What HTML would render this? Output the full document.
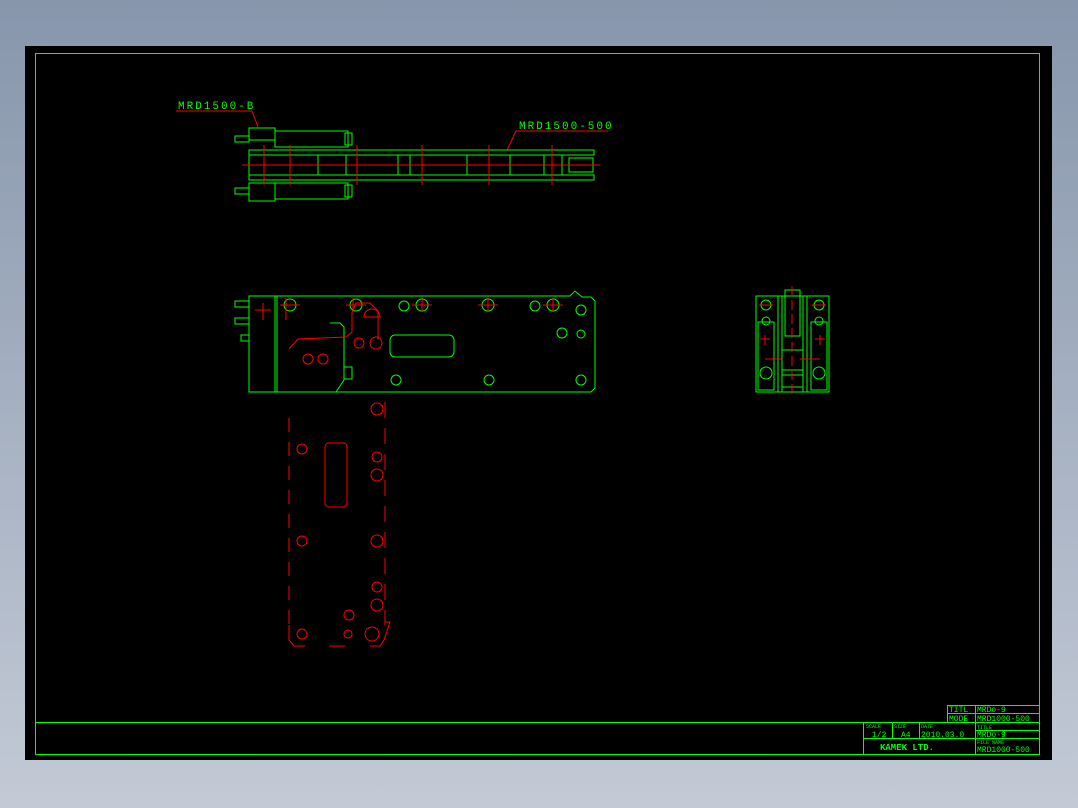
<!DOCTYPE html>
<html><head><style>
html,body{margin:0;padding:0;width:1078px;height:808px;overflow:hidden;background:linear-gradient(#8796ac,#c3cad6);}
svg{position:absolute;left:0;top:0}
text{font-family:"Liberation Mono",monospace;fill:#00ff00;}
</style></head><body>
<svg width="1078" height="808" viewBox="0 0 1078 808">
<rect x="25" y="46" width="1027" height="714" fill="#000"/>
<g fill="none" stroke="#00ff00" stroke-width="1" shape-rendering="crispEdges">
<rect x="35.5" y="53.5" width="1004" height="701"/>
<line x1="35" y1="722.5" x2="1039" y2="722.5"/>
<line x1="863.5" y1="722" x2="863.5" y2="754"/>
<line x1="947.5" y1="705" x2="947.5" y2="722"/>
<line x1="947" y1="705.5" x2="1039" y2="705.5"/>
<line x1="947" y1="713.5" x2="1039" y2="713.5"/>
<line x1="975.5" y1="705" x2="975.5" y2="754"/>
<line x1="863" y1="738.5" x2="1039" y2="738.5"/>
<line x1="892.5" y1="722" x2="892.5" y2="738"/>
<line x1="919.5" y1="722" x2="919.5" y2="738"/>
<line x1="975" y1="730.5" x2="1039" y2="730.5"/>
</g>
<g font-size="8">
<text x="949" y="712">TITL</text><text x="977" y="712">MRDo-9</text>
<text x="949" y="721">MODE</text><text x="977" y="721">MRD1000-500</text>
<text x="866" y="728" font-size="5">SCALE</text><text x="894" y="728" font-size="5">SIZE</text><text x="921" y="728" font-size="5">DATE</text>
<text x="872" y="737">1/2</text><text x="901" y="737">A4</text><text x="921" y="737">2010.03.0</text>
<text x="977" y="729" font-size="5">TITLE</text><text x="977" y="737">MRDo-9</text>
<text x="977" y="744" font-size="5">FILE NAME</text><text x="977" y="752">MRD1000-500</text>
<text x="880" y="750" font-weight="bold" font-size="9">KAMEK LTD.</text>
<text x="178" y="109" font-size="11" letter-spacing="2">MRD1500-B</text>
<text x="519" y="129" font-size="11" letter-spacing="2">MRD1500-500</text>
</g>
<g fill="none" stroke="#ff0000" stroke-width="1">
<line x1="176" y1="111" x2="252" y2="111"/><polyline points="252,111 258,127"/>
<line x1="516" y1="131" x2="608" y2="131"/><polyline points="516,131 507,150"/>
</g>
<!-- top view -->
<g fill="none" stroke="#00ff00" stroke-width="1">
<rect x="249" y="128" width="26" height="12"/><rect x="249" y="183" width="26" height="18"/>
<rect x="275" y="131" width="73" height="16"/><rect x="275" y="183" width="73" height="16"/>
<rect x="345" y="133" width="7" height="12"/><rect x="345" y="185" width="7" height="12"/>
<rect x="235" y="136" width="14" height="6"/><rect x="235" y="188" width="14" height="6"/>
<rect x="249" y="150" width="345" height="5"/><rect x="249" y="175" width="345" height="5"/>
<line x1="249" y1="155" x2="249" y2="175"/>
<rect x="569" y="158" width="24" height="14"/>
<line x1="318" y1="155" x2="318" y2="175"/><line x1="346" y1="155" x2="346" y2="175"/>
<line x1="398" y1="155" x2="398" y2="175"/><line x1="410" y1="155" x2="410" y2="175"/>
<line x1="467" y1="155" x2="467" y2="175"/><line x1="510" y1="155" x2="510" y2="175"/>
<line x1="544" y1="155" x2="544" y2="175"/><line x1="562" y1="155" x2="562" y2="175"/>
</g>
<g stroke="#ff0000" stroke-width="1">
<line x1="242" y1="165" x2="600" y2="165"/>
<line x1="264" y1="145" x2="264" y2="185"/><line x1="290" y1="145" x2="290" y2="185"/>
<line x1="357" y1="145" x2="357" y2="185"/><line x1="422" y1="145" x2="422" y2="185"/>
<line x1="489" y1="145" x2="489" y2="185"/><line x1="552" y1="145" x2="552" y2="185"/>
</g>
<!-- front view -->
<g fill="none" stroke="#00ff00" stroke-width="1">
<path d="M249,296 H570 L575,291 L582,297 H591 L595,301 V388 L591,392 H249 Z"/>
<line x1="275" y1="296" x2="275" y2="392"/><line x1="277" y1="296" x2="277" y2="392"/>
<rect x="235" y="301" width="14" height="6"/><rect x="235" y="318" width="14" height="6"/><rect x="241" y="335" width="8" height="6"/>
<rect x="390" y="335" width="64" height="22" rx="5"/>
<path d="M330,323 H340 L344,327 V380 L336,392"/><rect x="344" y="367" width="8" height="12"/>
<circle cx="290" cy="305" r="6"/><circle cx="356" cy="305" r="6"/><circle cx="404" cy="306" r="5"/><circle cx="422" cy="305" r="6"/><circle cx="488" cy="305" r="6"/><circle cx="535" cy="306" r="5"/><circle cx="553" cy="305" r="6"/>
<circle cx="581" cy="310" r="5"/><circle cx="562" cy="333" r="5"/><circle cx="581" cy="334" r="4"/>
<circle cx="396" cy="380" r="5"/><circle cx="489" cy="380" r="5"/><circle cx="581" cy="380" r="5"/>
</g>
<g fill="none" stroke="#ff0000" stroke-width="1">
<path d="M289,349 L298,339 L346,337 L352,332 V313 L356,303 H370 L378,311 V340"/>
<path d="M364,317 A8,8 0 0 1 380,317 Z"/>
<circle cx="359" cy="343" r="5"/><circle cx="376" cy="343" r="6"/>
<circle cx="308" cy="359" r="5"/><circle cx="323" cy="359" r="5"/>
<line x1="263" y1="303" x2="263" y2="320"/><line x1="255" y1="310" x2="271" y2="310"/>
<line x1="286" y1="298" x2="286" y2="320"/><line x1="353" y1="298" x2="353" y2="312"/><line x1="422" y1="298" x2="422" y2="312"/><line x1="488" y1="298" x2="488" y2="312"/><line x1="553" y1="298" x2="553" y2="312"/>
<line x1="280" y1="305" x2="300" y2="305"/><line x1="346" y1="305" x2="366" y2="305"/><line x1="412" y1="305" x2="432" y2="305"/><line x1="478" y1="305" x2="498" y2="305"/><line x1="543" y1="305" x2="563" y2="305"/>
</g>
<!-- lower red view -->
<g fill="none" stroke="#ff0000" stroke-width="1">
<line x1="289" y1="418" x2="289" y2="433" stroke-dasharray="14,10"/>
<line x1="289" y1="418" x2="289" y2="625" stroke-dasharray="14,10"/>
<line x1="385" y1="402" x2="385" y2="625" stroke-dasharray="16,10"/>
<path d="M289,625 V640 L294,646 H305 M329,646 H345 M370,646 H380 L384,640 L390,622 H385"/>
<rect x="325" y="443" width="22" height="64" rx="4"/>
<circle cx="302" cy="449" r="5"/><circle cx="302" cy="541" r="5"/><circle cx="302" cy="634" r="5"/>
<circle cx="377" cy="409" r="6"/><circle cx="377" cy="457" r="5"/><circle cx="377" cy="475" r="6"/><circle cx="377" cy="541" r="6"/><circle cx="377" cy="587" r="5"/><circle cx="377" cy="605" r="6"/><circle cx="372" cy="634" r="7"/>
<circle cx="349" cy="615" r="5"/><circle cx="348" cy="634" r="4"/>
</g>
<!-- side view -->
<g fill="none" stroke="#00ff00" stroke-width="1">
<rect x="756" y="296" width="73" height="96"/>
<rect x="785" y="290" width="15" height="46"/>
<rect x="758" y="322" width="16" height="68"/><rect x="811" y="322" width="16" height="68"/>
<line x1="778" y1="296" x2="778" y2="392"/><line x1="782" y1="296" x2="782" y2="392"/><line x1="803" y1="296" x2="803" y2="392"/><line x1="807" y1="296" x2="807" y2="392"/>
<line x1="782" y1="350" x2="803" y2="350"/><line x1="782" y1="370" x2="803" y2="370"/><line x1="782" y1="375" x2="803" y2="375"/><line x1="782" y1="387" x2="803" y2="387"/>
<circle cx="766" cy="305" r="5"/><circle cx="819" cy="305" r="5"/><circle cx="766" cy="321" r="4"/><circle cx="819" cy="321" r="4"/>
<circle cx="766" cy="373" r="6"/><circle cx="819" cy="373" r="6"/>
</g>
<g stroke="#ff0000" stroke-width="1">
<line x1="792" y1="286" x2="792" y2="396" stroke-dasharray="10,4"/>
<line x1="759" y1="305" x2="773" y2="305"/><line x1="812" y1="305" x2="826" y2="305"/>
<line x1="765" y1="335" x2="765" y2="345"/><line x1="760" y1="339" x2="770" y2="339"/>
<line x1="820" y1="335" x2="820" y2="345"/><line x1="815" y1="339" x2="825" y2="339"/>
<line x1="765" y1="359" x2="783" y2="359"/><line x1="800" y1="359" x2="820" y2="359"/>
</g>
</svg>
</body></html>
